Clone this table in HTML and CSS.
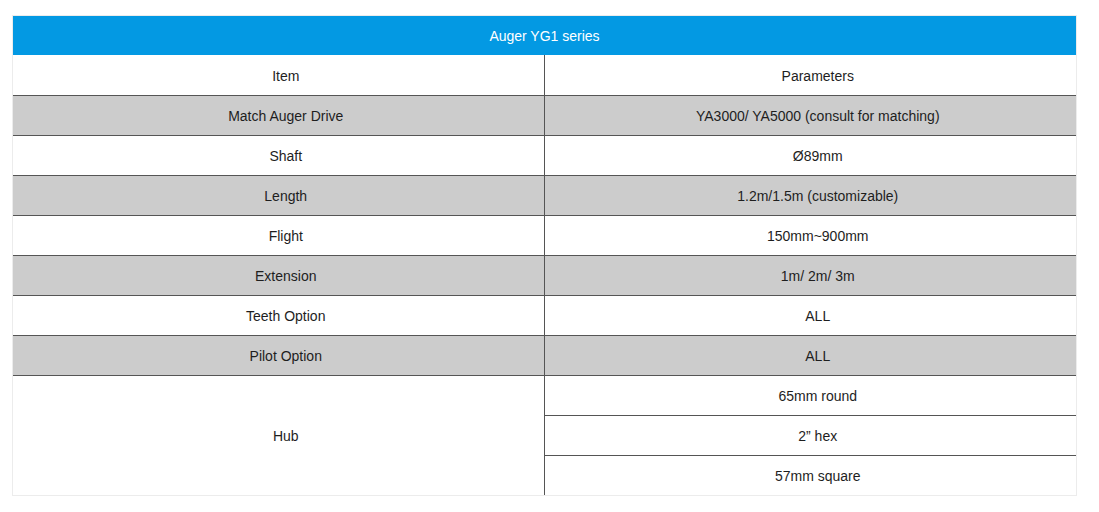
FILE: index.html
```html
<!DOCTYPE html>
<html>
<head>
<meta charset="utf-8">
<link rel="stylesheet" href="styles.css">
</head>
<body>
<div class="wrap">
<table class="spec">
  <thead>
    <tr><th colspan="2" class="title">Auger YG1 series</th></tr>
  </thead>
  <tbody>
    <tr class="first"><td class="l">Item</td><td>Parameters</td></tr>
    <tr class="gray"><td class="l">Match Auger Drive</td><td>YA3000/ YA5000 (consult for matching)</td></tr>
    <tr><td class="l">Shaft</td><td>Ø89mm</td></tr>
    <tr class="gray"><td class="l">Length</td><td>1.2m/1.5m (customizable)</td></tr>
    <tr><td class="l">Flight</td><td>150mm~900mm</td></tr>
    <tr class="gray"><td class="l">Extension</td><td>1m/ 2m/ 3m</td></tr>
    <tr><td class="l">Teeth Option</td><td>ALL</td></tr>
    <tr class="gray"><td class="l">Pilot Option</td><td>ALL</td></tr>
    <tr><td class="l last" rowspan="3">Hub</td><td>65mm round</td></tr>
    <tr><td>2” hex</td></tr>
    <tr><td class="last">57mm square</td></tr>
  </tbody>
</table>
</div>
</body>
</html>
```

FILE: styles.css
```css
html, body {
  margin: 0;
  padding: 0;
  background: #ffffff;
}

body {
  font-family: "Liberation Sans", Arial, sans-serif;
  font-size: 14px;
  color: #1e1e1e;
}

.wrap {
  padding: 15px 0 0 12px;
}

.spec {
  width: 1065px;
  border: 1px solid #ececec;
  border-collapse: separate;
  border-spacing: 0;
  table-layout: fixed;
}

.spec th.title {
  background: #0399e3;
  color: #ffffff;
  font-weight: normal;
  height: 39px;
  padding: 0;
  text-align: center;
  vertical-align: middle;
}

.spec td {
  height: 39px;
  padding: 0 0 0 15px;
  text-align: center;
  vertical-align: middle;
  border-bottom: 1px solid #555555;
}

.spec tr.first td {
  height: 38px;
  padding-top: 2px;
}

.spec td.l {
  border-right: 1px solid #555555;
}

.spec tr.gray td {
  background: #cccccc;
}

.spec td.last {
  border-bottom: none;
}
```
